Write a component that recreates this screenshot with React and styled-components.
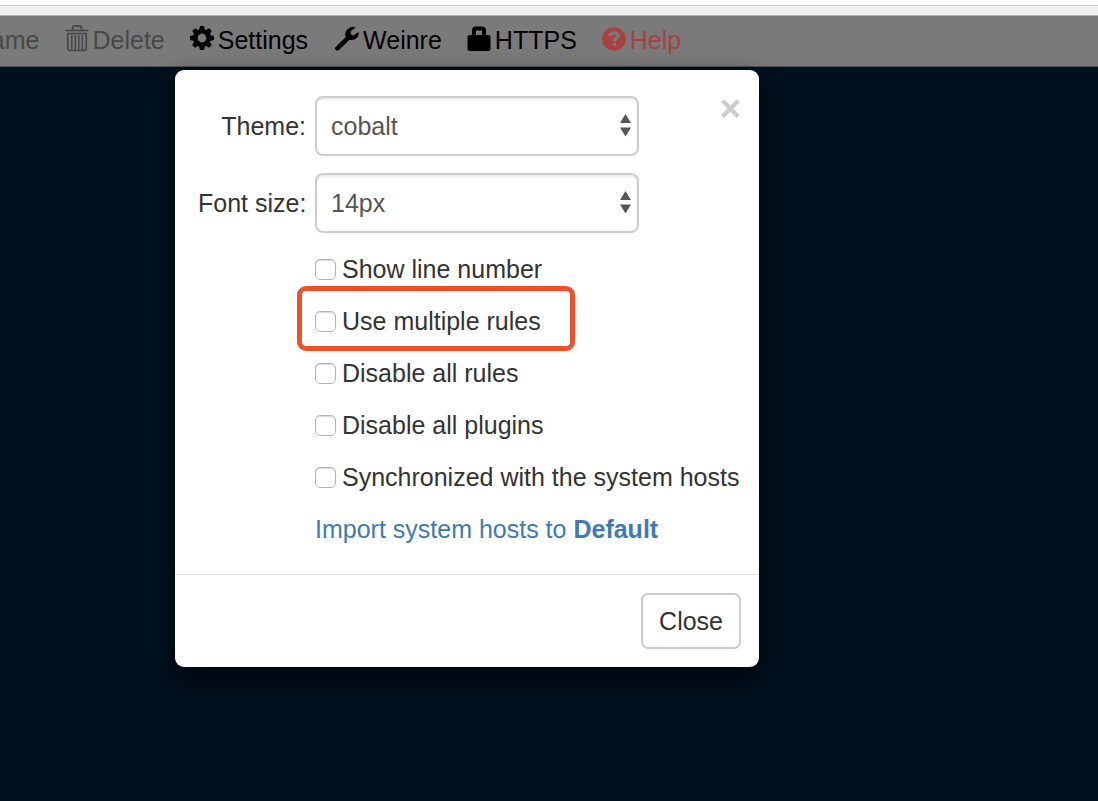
import { useState } from "react";
import styled, { createGlobalStyle } from "styled-components";

const GlobalStyle = createGlobalStyle`
    * {
        box-sizing: border-box;
    }

    body {
        margin: 0;
        background-color: #00101d;
        color: #333;
        font-family: "Liberation Sans", Arial, sans-serif;
        font-size: 25px;
        line-height: 36px;
    }

    button,
    select {
        font: inherit;
        color: inherit;
    }
`;

const Page = styled.div`
    min-height: 100vh;
    overflow: hidden;
`;

const WindowEdge = styled.div`
    height: 16px;
    border-top: 5px solid #fff;
    border-bottom: 1px solid #b0b0b0;
    background-color: #f0f0f0;
    box-shadow: inset 0 1px 0 #ccc;
`;

const Toolbar = styled.nav`
    display: flex;
    gap: 25px;
    height: 51px;
    margin-left: -55px;
    padding-top: 6px;
    background-color: #7a7a7a;
    border-bottom: 1px solid #4c5357;
`;

const ToolbarLink = styled.a`
    display: flex;
    gap: 4px;
    color: ${({ $color }) => $color || "#000"};
    text-decoration: none;
    white-space: nowrap;

    svg {
        flex: none;
        margin-top: 3px;
    }
`;

const Dialog = styled.section`
    position: relative;
    max-width: 584px;
    margin: 3px 0 0 175px;
    border-radius: 9px;
    background-color: #fff;
    box-shadow: 0 9px 26px rgba(0, 0, 0, 0.7);
`;

const DialogBody = styled.form`
    padding: 26px 18px 19px 23px;
`;

const Field = styled.div`
    display: grid;
    grid-template-columns: 108px 324px;
    column-gap: 9px;
    align-items: center;
    margin-bottom: 17px;
`;

const FieldLabel = styled.label`
    text-align: right;
    white-space: nowrap;
`;

const SelectBox = styled.div`
    position: relative;
    color: #555;

    svg {
        position: absolute;
        top: 18px;
        right: 8px;
        pointer-events: none;
    }
`;

const Select = styled.select`
    display: block;
    width: 100%;
    height: 60px;
    padding: 0 32px 0 14px;
    border: 2px solid #ccc;
    border-radius: 8px;
    background-color: #fff;
    box-shadow: inset 0 2px 2px rgba(0, 0, 0, 0.075);
    appearance: none;
`;

const Options = styled.div`
    display: flex;
    flex-direction: column;
    align-items: flex-start;
    margin-top: -7px;
    padding-left: 117px;
`;

const Option = styled.label`
    position: relative;
    display: flex;
    align-items: center;
    gap: 6px;
    height: 52px;
    white-space: nowrap;
`;

const MarkedOption = styled(Option)`
    &::after {
        content: "";
        position: absolute;
        inset: -9px -34px -4px -18px;
        border: 5px solid #ee5128;
        border-radius: 9px;
        pointer-events: none;
    }
`;

const Checkbox = styled.input`
    width: 21px;
    height: 21px;
    margin: 0;
    border: 1px solid #b4b4b4;
    border-radius: 5px;
    background-color: #fff;
    box-shadow: inset 0 1px 1px rgba(0, 0, 0, 0.15);
    appearance: none;

    &:checked {
        background-color: #337ab7;
    }
`;

const ImportLink = styled.a`
    color: #4179b3;
    line-height: 52px;
    text-decoration: none;
    white-space: nowrap;
`;

const DialogFooter = styled.footer`
    display: flex;
    justify-content: flex-end;
    padding: 18px;
    border-top: 1px solid #ddd;
`;

const CloseButton = styled.button`
    height: 56px;
    padding: 0 16px;
    border: 2px solid #ccc;
    border-radius: 7px;
    background-color: #fff;
`;

const Dismiss = styled.button`
    position: absolute;
    top: 20px;
    right: 18px;
    padding: 0;
    border: 0;
    background: none;
    color: #ccc;
    font-size: 37px;
    font-weight: bold;
    line-height: 37px;
`;

function TrashIcon() {
    return (
        <svg width="24" height="27" viewBox="0 0 24 27" fill="none" stroke="currentColor" aria-hidden="true">
            <path d="M0.5 5.5H23.5" strokeWidth="1.6" />
            <path d="M7.5 5V3Q7.5 1 9.5 1H14.5Q16.5 1 16.5 3V5" strokeWidth="1.8" />
            <path d="M2.8 8.5H21.2V23.5Q21.2 25.5 19.2 25.5H4.8Q2.8 25.5 2.8 23.5Z" strokeWidth="1.7" />
            <path d="M6.8 10V25M10.3 10V25M13.8 10V25M17.3 10V25" strokeWidth="1.5" />
        </svg>
    );
}

function CogIcon() {
    return (
        <svg width="24" height="27" viewBox="-12 -13 24 27" fill="currentColor" aria-hidden="true">
            {[0, 45, 90, 135, 180, 225, 270, 315].map((angle) => (
                <path key={angle} d="M-3.2 -7L-2 -11.9H2L3.2 -7Z" transform={`rotate(${angle})`} />
            ))}
            <circle r="6.7" fill="none" stroke="currentColor" strokeWidth="4.6" />
        </svg>
    );
}

function WrenchIcon() {
    return (
        <svg width="26" height="27" viewBox="0 0 26 27" fill="currentColor" aria-hidden="true">
            <path d="M2.2 22.4L12.6 12.3Q11.4 7.6 14.2 4.4Q17.5 1.1 21.7 2L22.3 2.8L17.7 6.3V9.3L20.3 10.6L25.1 7.2L25.9 7.9Q25.6 12.2 22.4 14Q19.6 15.5 16.4 14.7L6 25.1Q4.6 26.4 3.3 25.3L2.2 24.2Q1.2 23.3 2.2 22.4Z" />
        </svg>
    );
}

function LockIcon() {
    return (
        <svg width="24" height="27" viewBox="0 0 24 27" fill="currentColor" aria-hidden="true">
            <path d="M7 11V5.5Q7 3.5 9 3.5H15Q17 3.5 17 5.5V11" fill="none" stroke="currentColor" strokeWidth="4" />
            <rect x="0.5" y="10" width="23" height="16" rx="2" />
        </svg>
    );
}

function HelpIcon() {
    return (
        <svg width="24" height="27" viewBox="0 0 24 27" fill="none" aria-hidden="true">
            <circle cx="12" cy="14" r="11.8" fill="currentColor" />
            <path d="M7.8 11.2Q8 7.9 12.2 7.9Q16 8 16 10.9Q16 12.5 14.2 13.5Q12.4 14.5 12.4 16.4" stroke="#7a7a7a" strokeWidth="3.2" />
            <path d="M10.8 18.2H14V21H10.8Z" fill="#7a7a7a" />
        </svg>
    );
}

function SortArrows() {
    return (
        <svg width="11" height="23" viewBox="0 0 11 23" fill="currentColor" aria-hidden="true">
            <path d="M0 9L5.5 0L11 9ZM0 13.5H11L5.5 22.5Z" />
        </svg>
    );
}

export default function App() {
    const [theme, setTheme] = useState("cobalt");
    const [fontSize, setFontSize] = useState("14px");

    return (
        <Page>
            <GlobalStyle />
            <WindowEdge />
            <Toolbar>
                <ToolbarLink href="#rename" $color="#484848">Rename</ToolbarLink>
                <ToolbarLink href="#delete" $color="#484848"><TrashIcon />Delete</ToolbarLink>
                <ToolbarLink href="#settings"><CogIcon />Settings</ToolbarLink>
                <ToolbarLink href="#weinre"><WrenchIcon />Weinre</ToolbarLink>
                <ToolbarLink href="#https"><LockIcon />HTTPS</ToolbarLink>
                <ToolbarLink href="#help" $color="#a94143"><HelpIcon />Help</ToolbarLink>
            </Toolbar>

            <Dialog role="dialog" aria-label="Settings">
                <DialogBody>
                    <Field>
                        <FieldLabel htmlFor="theme">Theme:</FieldLabel>
                        <SelectBox>
                            <Select id="theme" value={theme} onChange={(e) => setTheme(e.target.value)}>
                                <option>cobalt</option>
                                <option>default</option>
                            </Select>
                            <SortArrows />
                        </SelectBox>
                    </Field>
                    <Field>
                        <FieldLabel htmlFor="fontSize">Font size:</FieldLabel>
                        <SelectBox>
                            <Select id="fontSize" value={fontSize} onChange={(e) => setFontSize(e.target.value)}>
                                <option>14px</option>
                                <option>16px</option>
                            </Select>
                            <SortArrows />
                        </SelectBox>
                    </Field>
                    <Options>
                        <Option><Checkbox type="checkbox" />Show line number</Option>
                        <MarkedOption><Checkbox type="checkbox" />Use multiple rules</MarkedOption>
                        <Option><Checkbox type="checkbox" />Disable all rules</Option>
                        <Option><Checkbox type="checkbox" />Disable all plugins</Option>
                        <Option><Checkbox type="checkbox" />Synchronized with the system hosts</Option>
                        <ImportLink href="#import">Import system hosts to <b>Default</b></ImportLink>
                    </Options>
                </DialogBody>
                <DialogFooter>
                    <CloseButton type="button">Close</CloseButton>
                </DialogFooter>
                <Dismiss type="button" aria-label="Dismiss">×</Dismiss>
            </Dialog>
        </Page>
    );
}
